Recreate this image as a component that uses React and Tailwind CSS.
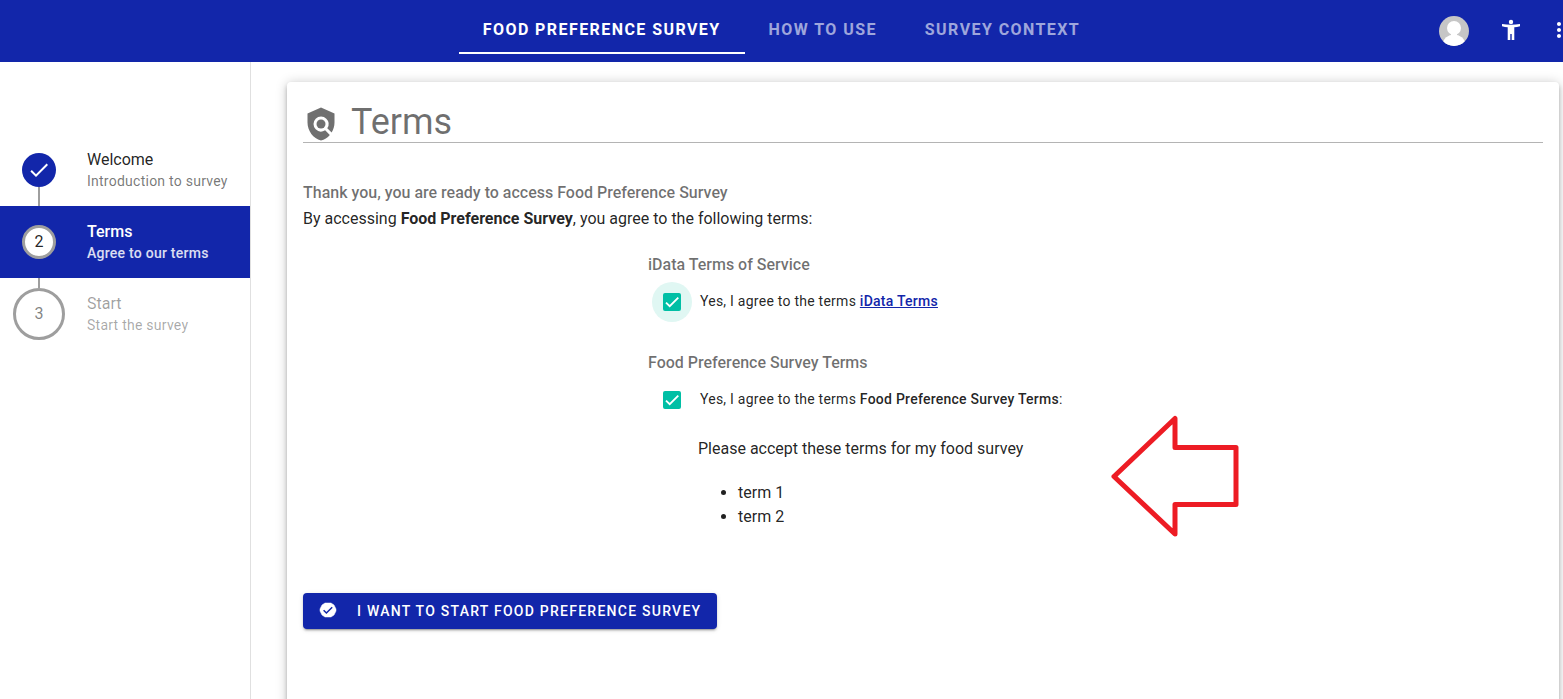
import { useState } from "react";
import { MdCheck, MdMoreVert, MdPolicy } from "react-icons/md";

const tabs = ["Food Preference Survey", "How to use", "Survey Context"];

function Header() {
  return (
    <header className="grid h-[62px] shrink-0 grid-cols-[1fr_auto_1fr] items-center overflow-hidden bg-[#1226aa] text-white">
      <div />
      <nav className="flex pb-0.5">
        {tabs.map((tab, i) => (
          <a
            key={tab}
            href="#"
            aria-current={i === 0 ? "page" : undefined}
            className={
              "flex h-12 items-center border-b-2 px-6 pt-0.5 font-bold uppercase tracking-[0.0892em] " +
              (i === 0 ? "border-white" : "border-transparent text-white/60")
            }
          >
            {tab}
          </a>
        ))}
      </nav>
      <div className="-mr-5 flex items-center justify-end">
        <button type="button" aria-label="Account" className="mr-[18px]">
          <svg viewBox="0 0 30 30" className="size-[30px]">
            <defs>
              <clipPath id="avatar">
                <circle cx="15" cy="15" r="15" />
              </clipPath>
            </defs>
            <g clipPath="url(#avatar)">
              <rect width="30" height="30" fill="#c6c6c6" />
              <ellipse cx="15" cy="12" rx="7" ry="7" fill="#fff" />
              <rect x="12" y="16" width="6" height="5" fill="#fff" />
              <ellipse cx="15" cy="28" rx="11" ry="9.5" fill="#fff" />
            </g>
          </svg>
        </button>
        <button type="button" aria-label="Accessibility" className="flex size-12 items-center justify-center pb-0.5">
          <svg viewBox="0 0 24 24" className="size-6" fill="currentColor">
            <circle cx="12" cy="4" r="2.2" />
            <path d="M21 8.3c-2 .6-4 .8-5.700.9V22h-2.600v-6h-1.400v6H8.700V9.200C7 9.100 5 8.900 3 8.300V6c6 1 12 1 18 0Z" />
          </svg>
        </button>
        <button type="button" aria-label="More" className="flex size-12 items-center justify-center pb-0.5">
          <MdMoreVert className="size-6" />
        </button>
      </div>
    </header>
  );
}

function Step({ marker, title, text, state }) {
  const row = {
    done: "text-black/87",
    active: "bg-[#1226aa] text-white font-medium",
    next: "text-black/38",
  }[state];
  const sub = { done: "text-black/55", active: "text-white/85", next: "text-black/35" }[state];
  const circle = {
    done: "size-[34px] bg-[#1226aa] text-white",
    active: "size-[34px] border-3 border-[#9e9e9e] bg-white font-normal text-black/87",
    next: "size-[52px] border-3 border-[#9e9e9e] bg-white text-black/50",
  }[state];
  return (
    <li className={"flex h-18 items-center " + row}>
      <div className="relative flex h-full w-[78px] shrink-0 items-center justify-center">
        {state === "done" && <span className="absolute bottom-0 h-[19px] w-0.5 bg-[#9e9e9e]" />}
        {state === "next" && <span className="absolute top-0 h-[10px] w-0.5 bg-[#9e9e9e]" />}
        <span className={"flex items-center justify-center rounded-full " + circle}>{marker}</span>
      </div>
      <div className="pl-[9px]">
        <div className="leading-[22px]">{title}</div>
        <div className={"text-sm leading-5 tracking-[0.0178em] " + sub}>{text}</div>
      </div>
    </li>
  );
}

function Agreement({ id, halo, children }) {
  const [checked, setChecked] = useState(true);
  return (
    <div className="mt-1 flex h-[42px] items-center gap-2 pl-1">
      <span className={"relative flex size-10 items-center justify-center rounded-full " + (halo ? "bg-[#e0f7f3]" : "")}>
        <input
          id={id}
          type="checkbox"
          checked={checked}
          onChange={(e) => setChecked(e.target.checked)}
          className="size-[18px] appearance-none rounded-xs border-2 border-[#00bfa5] checked:bg-[#00bfa5]"
        />
        {checked && (
          <svg viewBox="0 0 24 24" className="pointer-events-none absolute size-[14px]" fill="none" stroke="#fff" strokeWidth="3.12">
            <path d="M1.73 12.91 8.1 19.28 22.79 4.59" />
          </svg>
        )}
      </span>
      <label htmlFor={id} className="pb-0.5 text-sm tracking-[0.0178em]">
        {children}
      </label>
    </div>
  );
}

export default function App() {
  return (
    <div className="flex h-screen flex-col overflow-hidden bg-white font-[Roboto,sans-serif] text-base text-black/87">
      <Header />
      <div className="flex min-h-0 flex-1">
        <aside className="w-[251px] shrink-0 border-r border-[#e0e0e0] pt-18">
          <ol>
            <Step state="done" marker={<MdCheck className="size-6" />} title="Welcome" text="Introduction to survey" />
            <Step state="active" marker="2" title="Terms" text="Agree to our terms" />
            <Step state="next" marker="3" title="Start" text="Start the survey" />
          </ol>
        </aside>
        <main className="min-w-0 flex-1 overflow-hidden pl-9 pr-1 pt-5">
          <section className="min-h-[calc(100%+16px)] rounded-sm bg-white px-4 pt-4 shadow-[0_3px_3px_-2px_rgba(0,0,0,0.2),0_3px_4px_rgba(0,0,0,0.2),0_1px_12px_rgba(0,0,0,0.22)]">
            <h1 className="flex h-[45px] items-center gap-3 border-b border-[#b4b4b4] pt-1 text-4xl text-black/56">
              <MdPolicy className="mt-1 size-9" />
              Terms
            </h1>
            <h2 className="mt-9 font-medium leading-7 text-black/56">
              Thank you, you are ready to access Food Preference Survey
            </h2>
            <p className="leading-6">
              By accessing <b>Food Preference Survey</b>, you agree to the following terms:
            </p>
            <div className="relative mx-auto mt-[22px] w-full max-w-[550px]">
              <h3 className="font-medium leading-6 text-black/56">iData Terms of Service</h3>
              <Agreement id="idata" halo>
                Yes, I agree to the terms{" "}
                <a href="#" className="font-medium text-[#1226aa] underline">
                  iData Terms
                </a>
              </Agreement>
              <h3 className="mt-7 font-medium leading-6 text-black/56">Food Preference Survey Terms</h3>
              <Agreement id="survey">
                Yes, I agree to the terms <span className="font-medium">Food Preference Survey Terms</span>:
              </Agreement>
              <div className="pl-[50px] pt-4">
                <p className="leading-6">Please accept these terms for my food survey</p>
                <ul className="mt-5 list-disc pl-10 leading-6">
                  <li>term 1</li>
                  <li>term 2</li>
                </ul>
              </div>
              <svg
                viewBox="0 0 130 124"
                className="absolute right-[-42px] top-[161px] h-[124px] w-[130px]"
                fill="none"
                stroke="#ed1c24"
                strokeWidth="5"
                strokeLinejoin="round"
              >
                <path d="M4 62.5 65 4.5V33.5H126V90.5H65V120Z" />
              </svg>
            </div>
            <button
              type="button"
              className="mt-16 flex h-9 items-center gap-5 rounded-sm bg-[#1226aa] px-4 text-sm font-medium uppercase tracking-[0.0892em] text-white shadow-[0_3px_1px_-2px_rgba(0,0,0,0.2),0_2px_2px_rgba(0,0,0,0.14),0_1px_5px_rgba(0,0,0,0.12)]"
            >
              <svg viewBox="0 0 18 18" className="size-[18px]">
                <path d="M6 1h6l3 2 2 4v2l-2 4-3 2H6l-3-2-2-4V7l2-4Z" fill="#fff" stroke="#fff" strokeLinejoin="round" strokeWidth="0.5" />
                <path d="m4.6 8.2 2.8 2.8 5.8-5.8" fill="none" stroke="#1226aa" strokeWidth="1.5" />
              </svg>
              I want to start Food Preference Survey
            </button>
          </section>
        </main>
      </div>
    </div>
  );
}
